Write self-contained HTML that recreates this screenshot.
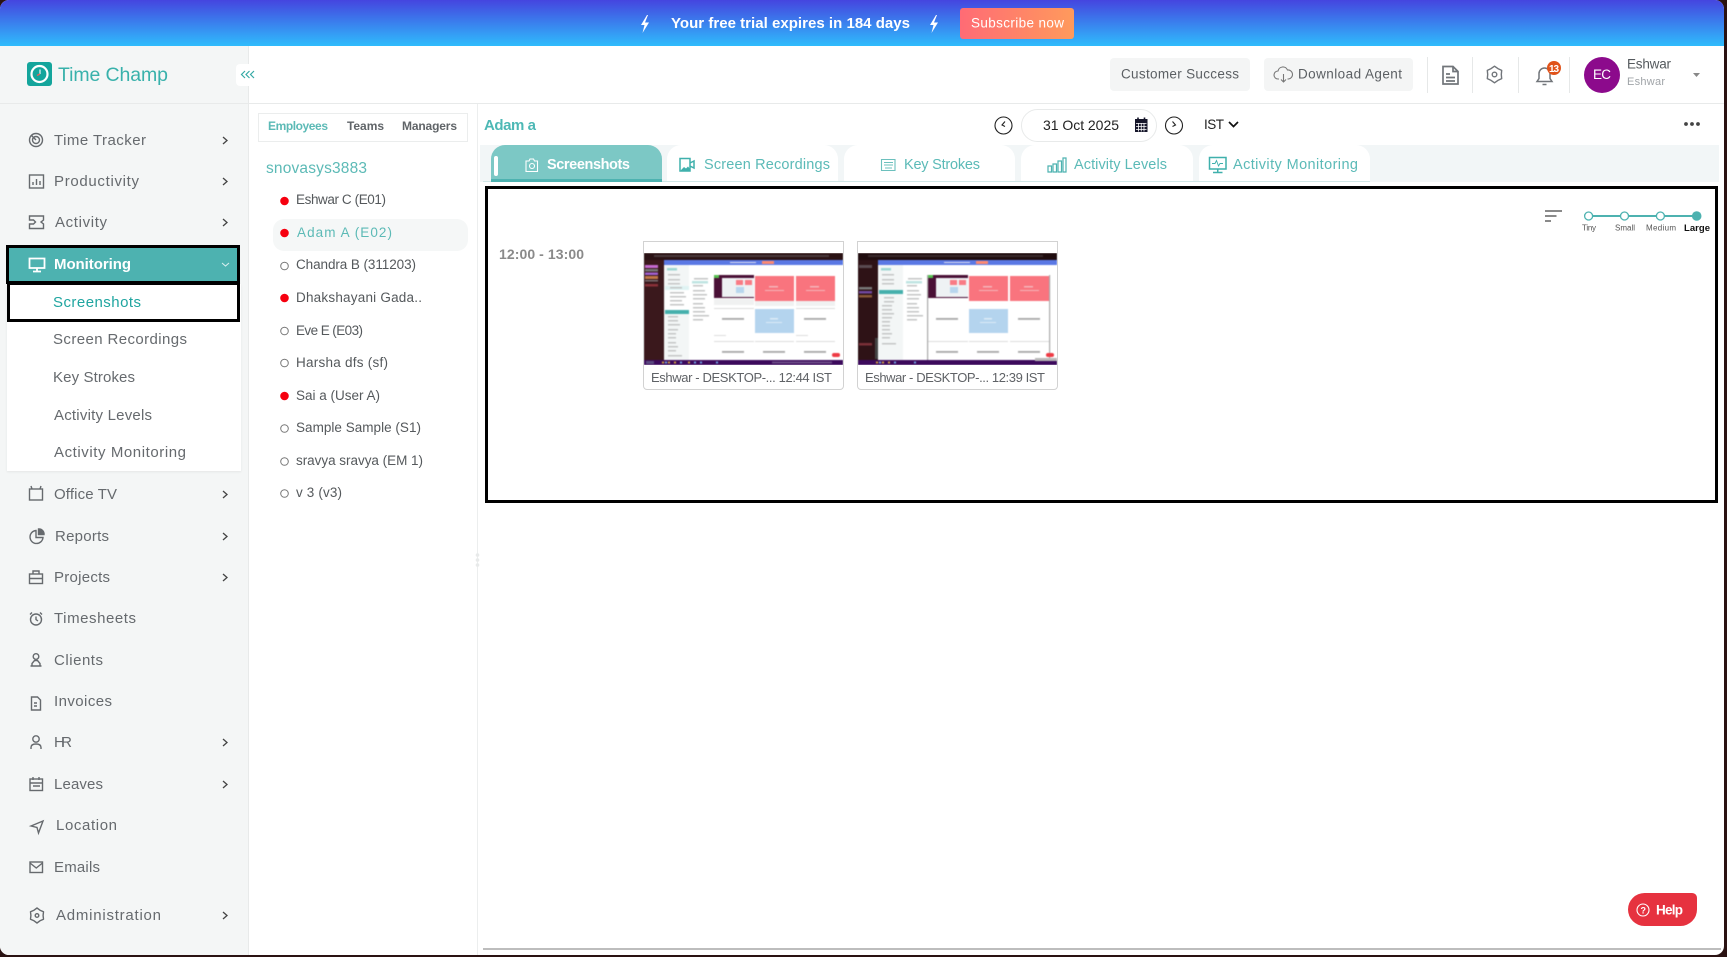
<!DOCTYPE html>
<html><head><meta charset="utf-8"><title>Time Champ</title>
<style>
html,body{margin:0;padding:0;width:1727px;height:957px;overflow:hidden;background:#2a1212}
*{box-sizing:border-box}
#app{position:absolute;left:0;top:0;width:1724px;height:955px;background:#fff;border-radius:9px;overflow:hidden}
.b{position:absolute}
svg{position:absolute;left:0;top:0}
text{font-family:"Liberation Sans",sans-serif}
.m{font-size:15px;fill:#666a6e}
.s{font-size:15px;fill:#666a6e}
.l{font-size:13.5px;fill:#55595c}
.tb{font-size:14.5px;fill:#5bbab7}
.ic{fill:none;stroke:#666a6e;stroke-width:1.4}
.ch{fill:none;stroke:#444;stroke-width:1.3}
.th{position:absolute;width:199px;height:112px;overflow:hidden}
.th svg{filter:blur(.45px)}
</style></head><body>
<div id="app">
<div class="b" style="left:0;top:0;width:100%;height:46px;background:linear-gradient(180deg,#4545df,#2fbcfc)"></div>
<div class="b" style="left:960px;top:8px;width:114px;height:31px;border-radius:3px;background:linear-gradient(90deg,#ff6b75,#ff9a5c)"></div>
<div class="b" style="left:0;top:46px;width:249px;height:909px;background:#f4f6f6;border-right:1px solid #e8eaea"></div>
<div class="b" style="left:0;top:103px;width:100%;height:1px;background:#e8eaea"></div>
<div class="b" style="left:236px;top:64px;width:23px;height:22px;background:#fff;border-radius:4px"></div>
<div class="b" style="left:27px;top:62px;width:25px;height:24px;background:#14a59c;border-radius:3px"></div>
<div class="b" style="left:7px;top:284px;width:234px;height:187px;background:#fff;box-shadow:0 1px 2px #e4e6e6"></div>
<div class="b" style="left:6px;top:245px;width:234px;height:39px;background:#4db2b0;border:3px solid #000"></div>
<div class="b" style="left:7px;top:282px;width:233px;height:40px;background:#fff;border:3px solid #000"></div>
<div class="b" style="left:477px;top:104px;width:1px;height:851px;background:#eceeee"></div>
<div class="b" style="left:258px;top:113px;width:210px;height:29px;border:1px solid #ebeded"></div>
<div class="b" style="left:273px;top:219px;width:195px;height:32px;background:#f5f7f7;border-radius:11px"></div>
<div class="b" style="left:1110px;top:58px;width:140px;height:33px;background:#f4f5f5;border-radius:4px"></div>
<div class="b" style="left:1264px;top:58px;width:149px;height:33px;background:#f4f5f5;border-radius:4px"></div>
<div class="b" style="left:1427px;top:57px;width:1px;height:36px;background:#e6e8e8"></div>
<div class="b" style="left:1472px;top:57px;width:1px;height:36px;background:#e6e8e8"></div>
<div class="b" style="left:1518px;top:57px;width:1px;height:36px;background:#e6e8e8"></div>
<div class="b" style="left:1569px;top:57px;width:1px;height:36px;background:#e6e8e8"></div>
<div class="b" style="left:1584px;top:57px;width:36px;height:36px;background:#8c0a8c;border-radius:50%"></div>
<div class="b" style="left:1021px;top:109px;width:136px;height:33px;border:1px solid #e8eaea;border-radius:17px"></div>
<div class="b" style="left:480px;top:145px;width:1239px;height:37px;background:#f2f6f7"></div>
<div class="b" style="left:483px;top:181px;width:887px;height:1px;background:#cfe6e6"></div>
<div class="b" style="left:491px;top:145px;width:171px;height:37px;background:#7cc8c5;border-radius:14px 14px 0 0;border-bottom:3px solid #4db2b0"></div>
<div class="b" style="left:494px;top:156px;width:4px;height:20px;background:#fff;border-radius:2px"></div>
<div class="b" style="left:667px;top:145px;width:171px;height:36px;background:#fff;border-radius:14px 14px 0 0"></div>
<div class="b" style="left:844px;top:145px;width:171px;height:36px;background:#fff;border-radius:14px 14px 0 0"></div>
<div class="b" style="left:1021px;top:145px;width:172px;height:36px;background:#fff;border-radius:14px 14px 0 0"></div>
<div class="b" style="left:1199px;top:145px;width:171px;height:36px;background:#fff;border-radius:14px 14px 0 0"></div>
<div class="b" style="left:485px;top:186px;width:1233px;height:317px;border:3px solid #000"></div>
<div class="b" style="left:643px;top:241px;width:201px;height:149px;border:1px solid #d2d2d2;border-radius:0 0 4px 4px;background:#fff"></div>
<div class="b" style="left:857px;top:241px;width:201px;height:149px;border:1px solid #d2d2d2;border-radius:0 0 4px 4px;background:#fff"></div>

<div class="th" style="left:644px;top:253px"><svg width="199" height="112" viewBox="0 0 199 112">
<rect width="199" height="112" fill="#3a181c"/><rect width="199" height="7" fill="#2a1214"/><rect x="10" y="2" width="175" height="2" fill="#4a3a3c"/>
<rect x="20" y="7" width="179" height="5" fill="#5a78e4"/><rect x="118" y="8" width="12" height="3" fill="#ff8a70"/><rect x="86" y="9" width="26" height="1" fill="#dde"/>
<rect x="20" y="12" width="179" height="95" fill="#fff"/>
<rect x="20" y="12" width="25" height="95" fill="#f3f6f6"/><rect x="21" y="33" width="24" height="4" fill="#dff3f3"/><rect x="21" y="37" width="24" height="20" fill="#fff"/><rect x="21" y="57" width="24" height="4" fill="#45b0ac"/>
<rect x="23" y="15" width="10" height="2.500" fill="#9fd6d3"/>
<g fill="#c4c6c6"><rect x="24" y="21" width="12" height="1.500"/><rect x="24" y="26" width="12" height="1.500"/><rect x="24" y="30" width="12" height="1.500"/><rect x="26" y="34" width="12" height="1.500"/><rect x="26" y="39" width="14" height="1.500"/><rect x="26" y="43" width="16" height="1.500"/><rect x="26" y="47" width="12" height="1.500"/><rect x="26" y="51" width="14" height="1.500"/><rect x="24" y="63" width="10" height="1.500"/><rect x="24" y="67" width="10" height="1.500"/><rect x="24" y="71" width="12" height="1.500"/><rect x="24" y="76" width="10" height="1.500"/><rect x="24" y="80" width="8" height="1.500"/><rect x="24" y="84" width="8" height="1.500"/><rect x="24" y="89" width="8" height="1.500"/><rect x="24" y="93" width="10" height="1.500"/><rect x="24" y="97" width="8" height="1.500"/><rect x="24" y="102" width="14" height="1.500"/><rect x="50" y="25" width="14" height="1.500"/><rect x="49" y="32" width="10" height="1.500"/><rect x="49" y="37" width="12" height="1.500"/><rect x="49" y="41" width="14" height="1.500"/><rect x="49" y="45" width="12" height="1.500"/><rect x="49" y="50" width="10" height="1.500"/><rect x="49" y="54" width="12" height="1.500"/><rect x="49" y="58" width="12" height="1.500"/><rect x="49" y="62" width="16" height="1.500"/><rect x="49" y="66" width="10" height="1.500"/></g>
<rect x="48" y="28" width="16" height="2.500" fill="#bfe4e2"/>
<g fill="#f0f1f1"><rect x="70" y="46" width="40" height="6"/><rect x="111" y="48" width="39" height="5"/><rect x="152" y="48" width="39" height="5"/></g>
<rect x="70" y="22" width="40" height="23" fill="#4a1036"/><rect x="78" y="25" width="32" height="19" fill="#eef2f4"/><rect x="70" y="22" width="5" height="3" fill="#56c050"/><rect x="92" y="27" width="7" height="5" fill="#f97b85"/><rect x="101" y="27" width="7" height="5" fill="#f97b85"/><rect x="92" y="34" width="8" height="6" fill="#b8d6ee"/>
<rect x="111" y="23" width="39" height="25" fill="#f9747e"/><rect x="152" y="23" width="39" height="25" fill="#f9747e"/><rect x="111" y="56" width="39" height="24" fill="#b4d4ee"/>
<g fill="#f4b5ba"><rect x="125" y="33" width="9" height="1.500"/><rect x="121" y="37" width="19" height="1"/><rect x="166" y="33" width="9" height="1.500"/><rect x="162" y="37" width="19" height="1"/></g>
<g fill="#dcebf7"><rect x="126" y="65" width="8" height="1.500"/><rect x="122" y="69" width="16" height="1"/></g>
<g fill="#a8a8a8"><rect x="78" y="65" width="22" height="1.800"/><rect x="160" y="65" width="22" height="1.800"/><rect x="78" y="98" width="22" height="1.800"/><rect x="119" y="98" width="22" height="1.800"/><rect x="160" y="98" width="22" height="1.800"/></g>
<g fill="#ddd"><rect x="70" y="55" width="40" height="1"/><rect x="152" y="55" width="39" height="1"/><rect x="70" y="88" width="40" height="1"/><rect x="111" y="88" width="39" height="1"/><rect x="152" y="88" width="39" height="1"/><rect x="70" y="82" width="12" height="1"/><rect x="152" y="82" width="12" height="1"/></g>
<rect x="188" y="100" width="8" height="4" rx="2" fill="#ee3b45"/>
<rect y="107" width="199" height="5" fill="#3c0a5c"/>
<g fill="#cfa040"><rect x="18" y="108.500" width="2" height="2"/><rect x="24" y="108.500" width="2" height="2"/><rect x="30" y="108.500" width="2" height="2"/><rect x="44" y="108.500" width="2" height="2"/></g><g fill="#6fa0e0"><rect x="21" y="108.500" width="2" height="2"/><rect x="36" y="108.500" width="2" height="2"/><rect x="50" y="108.500" width="2" height="2"/><rect x="56" y="108.500" width="2" height="2"/><rect x="72" y="108.500" width="2" height="2"/></g><rect x="2" y="108" width="8" height="3" fill="#5a4a80"/><rect x="128" y="108.500" width="60" height="2" fill="#6a4a85"/>
<rect x="1" y="12" width="13" height="3" fill="#c56ad0"/><rect x="1" y="16" width="13" height="2.500" fill="#777"/><rect x="1" y="19.500" width="13" height="2.500" fill="#a060d0"/><rect x="1" y="23" width="13" height="3" fill="#c07848"/><rect x="1" y="27" width="13" height="1.500" fill="#7a7072"/><rect x="1" y="31" width="13" height="2.500" fill="#8a3038"/>
</svg></div>
<div class="th" style="left:858px;top:253px"><svg width="199" height="112" viewBox="0 0 199 112">
<rect width="199" height="112" fill="#2e1216"/><rect width="199" height="7" fill="#1f0c0e"/><rect x="10" y="2" width="175" height="2" fill="#3a2a2c"/>
<rect x="20" y="7" width="179" height="5" fill="#5a78e4"/><rect x="118" y="8" width="12" height="3" fill="#ff8a70"/><rect x="86" y="9" width="26" height="1" fill="#dde"/>
<rect x="20" y="12" width="179" height="95" fill="#fff"/>
<rect x="20" y="12" width="25" height="95" fill="#f3f6f6"/><rect x="21" y="37" width="24" height="4" fill="#45b0ac"/>
<rect x="23" y="15" width="10" height="2.500" fill="#9fd6d3"/>
<g fill="#c4c6c6"><rect x="24" y="21" width="12" height="1.500"/><rect x="24" y="26" width="12" height="1.500"/><rect x="24" y="30" width="12" height="1.500"/><rect x="26" y="44" width="10" height="1.500"/><rect x="26" y="48" width="10" height="1.500"/><rect x="24" y="52" width="10" height="1.500"/><rect x="24" y="56" width="10" height="1.500"/><rect x="24" y="60" width="12" height="1.500"/><rect x="24" y="64" width="10" height="1.500"/><rect x="24" y="68" width="8" height="1.500"/><rect x="24" y="72" width="8" height="1.500"/><rect x="24" y="76" width="8" height="1.500"/><rect x="24" y="80" width="10" height="1.500"/><rect x="24" y="84" width="8" height="1.500"/><rect x="24" y="90" width="14" height="1.500"/><rect x="50" y="25" width="14" height="1.500"/><rect x="49" y="32" width="10" height="1.500"/><rect x="49" y="37" width="12" height="1.500"/><rect x="49" y="41" width="14" height="1.500"/><rect x="49" y="45" width="12" height="1.500"/><rect x="49" y="50" width="10" height="1.500"/><rect x="49" y="54" width="12" height="1.500"/><rect x="49" y="58" width="12" height="1.500"/><rect x="49" y="62" width="16" height="1.500"/><rect x="49" y="66" width="10" height="1.500"/></g>
<rect x="48" y="28" width="16" height="2.500" fill="#bfe4e2"/>
<rect x="70" y="22" width="40" height="23" fill="#4a1036"/><rect x="78" y="25" width="32" height="19" fill="#eef2f4"/><rect x="70" y="22" width="5" height="3" fill="#56c050"/><rect x="92" y="27" width="7" height="5" fill="#f97b85"/><rect x="101" y="27" width="7" height="5" fill="#f97b85"/><rect x="92" y="34" width="8" height="6" fill="#b8d6ee"/>
<rect x="111" y="23" width="39" height="25" fill="#f9747e"/><rect x="152" y="23" width="39" height="25" fill="#f9747e"/><rect x="111" y="56" width="39" height="24" fill="#b4d4ee"/>
<g fill="#f4b5ba"><rect x="125" y="33" width="9" height="1.500"/><rect x="121" y="37" width="19" height="1"/><rect x="166" y="33" width="9" height="1.500"/><rect x="162" y="37" width="19" height="1"/></g>
<g fill="#dcebf7"><rect x="126" y="65" width="8" height="1.500"/><rect x="122" y="69" width="16" height="1"/></g>
<g fill="#a8a8a8"><rect x="78" y="65" width="22" height="1.800"/><rect x="160" y="65" width="22" height="1.800"/><rect x="78" y="98" width="22" height="1.800"/><rect x="119" y="98" width="22" height="1.800"/><rect x="160" y="98" width="22" height="1.800"/></g>
<g fill="#ddd"><rect x="70" y="88" width="40" height="1"/><rect x="111" y="88" width="39" height="1"/><rect x="152" y="88" width="39" height="1"/></g>
<rect x="69" y="22" width="1.200" height="85" fill="#aaa"/><rect x="191" y="22" width="1.200" height="85" fill="#aaa"/>
<rect x="188" y="100" width="8" height="4" rx="2" fill="#ee3b45"/>
<rect x="17" y="85" width="3" height="21" fill="#444"/>
<rect y="107" width="199" height="5" fill="#3c0a5c"/>
<g fill="#cfa040"><rect x="18" y="108.500" width="2" height="2"/><rect x="24" y="108.500" width="2" height="2"/><rect x="30" y="108.500" width="2" height="2"/></g><g fill="#6fa0e0"><rect x="21" y="108.500" width="2" height="2"/><rect x="36" y="108.500" width="2" height="2"/><rect x="56" y="108.500" width="2" height="2"/></g><rect x="177" y="105" width="22" height="3" fill="#b8b8b8"/>
<rect x="1" y="12" width="13" height="3" fill="#5a4a50"/><rect x="1" y="34" width="13" height="2.500" fill="#777"/><rect x="1" y="38" width="13" height="2.500" fill="#7048a0"/><rect x="1" y="42" width="13" height="2.500" fill="#8a5a38"/><rect x="1" y="90" width="13" height="2.500" fill="#7a3038"/>
</svg></div>

<div class="b" style="left:1628px;top:893px;width:69px;height:33px;background:#e6323f;border-radius:17px 5px 17px 17px"></div>
<div class="b" style="left:483px;top:948px;width:1238px;height:2px;background:#bdbdbd"></div>
<svg width="1727" height="957" viewBox="0 0 1727 957">
<text x="671" y="28" font-size="15" font-weight="700" fill="#fff" textLength="239">Your free trial expires in 184 days</text>
<path d="M647 15l-6 10h3.500l-2 8 6.500-10.500h-4l3-7.500z" fill="#fff"/><path d="M936 15l-6 10h3.500l-2 8 6.500-10.500h-4l3-7.500z" fill="#fff"/>
<text x="971" y="27.500" font-size="13.500" fill="#fff" textLength="93">Subscribe now</text>
<circle cx="39.500" cy="74" r="8" fill="none" stroke="#fff" stroke-width="2.200"/><path d="M40 69.500v4.500" stroke="#fff" stroke-width="1.100"/><path d="M40 74l-3 1.500" stroke="#e8605a" stroke-width="1.300"/>
<text x="58" y="81" font-size="19.500" fill="#38b1ab" textLength="110">Time Champ</text>
<path d="M245 71l-3.500 3.500 3.500 3.500M249.500 71l-3.500 3.500 3.500 3.500M254 71l-3.500 3.500 3.500 3.500" fill="none" stroke="#35a9a5" stroke-width="1.200"/>
<text class="m" x="54" y="145" textLength="92">Time Tracker</text>
<text class="m" x="54" y="186" textLength="85">Productivity</text>
<text class="m" x="55" y="227" textLength="52">Activity</text>
<text x="54" y="269" font-size="15" fill="#fff" font-weight="700" textLength="77">Monitoring</text>
<text x="53" y="307" font-size="15" fill="#1fa5a0" textLength="88">Screenshots</text>
<text class="s" x="53" y="344" textLength="134">Screen Recordings</text>
<text class="s" x="53" y="382" textLength="82">Key Strokes</text>
<text class="s" x="54" y="420" textLength="98">Activity Levels</text>
<text class="s" x="54" y="457" textLength="132">Activity Monitoring</text>
<text class="m" x="54" y="499" textLength="63">Office TV</text>
<text class="m" x="55" y="541" textLength="54">Reports</text>
<text class="m" x="54" y="582" textLength="56">Projects</text>
<text class="m" x="54" y="623" textLength="82">Timesheets</text>
<text class="m" x="54" y="665" textLength="49">Clients</text>
<text class="m" x="54" y="706" textLength="58">Invoices</text>
<text class="m" x="54" y="747" textLength="18">HR</text>
<text class="m" x="54" y="789" textLength="49">Leaves</text>
<text class="m" x="56" y="830" textLength="61">Location</text>
<text class="m" x="54" y="872" textLength="46">Emails</text>
<text class="m" x="56" y="920" textLength="105">Administration</text>
<g class="ch">
<path d="M223 137l4 3.500-4 3.500M223 178l4 3.500-4 3.500M223 219l4 3.500-4 3.500M223 491l4 3.500-4 3.500M223 533l4 3.500-4 3.500M223 574l4 3.500-4 3.500M223 739l4 3.500-4 3.500M223 781l4 3.500-4 3.500M223 912l4 3.500-4 3.500"/></g>
<path d="M222 263l3.500 3 3.500-3" fill="none" stroke="#d5eeee" stroke-width="1.100"/>
<g class="ic">
<circle cx="36" cy="140" r="6.500"/><circle cx="36" cy="140" r="3.500"/><path d="M31 135l5 5"/>
<rect x="29.500" y="175" width="14" height="13"/><path d="M33 185v-3M36.500 185v-6M40 185v-4"/>
<path d="M29.500 216h14v4l-2.500 2 2.500 2v4.500h-14v-4.500h4l2-2-2-2h-4z"/>
<rect x="29.500" y="489" width="13" height="11"/><path d="M32 489l-1-3M40 489l1-3"/>
<path d="M36 530.500a6.500 6.500 0 1 0 7 7h-7z"/><path d="M38.500 529a5 5 0 0 1 5.500 5.500h-5.500z" fill="#666a6e"/>
<rect x="29.500" y="574" width="13" height="9.500"/><path d="M33 574v-3h6v3M29.500 578.500h13"/>
<circle cx="36" cy="619.500" r="5.500"/><path d="M36 616.500v3l2 1.500M30 614.500l2-2M42 614.500l-2-2"/>
<circle cx="36" cy="656.500" r="2.800"/><path d="M32 666v-2.500l2.500-3h3l2.500 3v2.500zM30.500 666h11"/>
<path d="M31.500 697h6l3 3v10h-9zM34 703h3M34 706h3"/>
<circle cx="36" cy="739" r="3.200"/><path d="M31 749v-1.500c0-2.500 2-3.500 5-3.500s5 1 5 3.500v1.500"/>
<rect x="30" y="779" width="12.500" height="11.500"/><path d="M33 777v3M39 777v3M30 783h12.500M33 786h7"/>
<path d="M31 826l12-5-4.500 12-1.500-5.500z"/>
<rect x="30" y="862" width="12.500" height="10.500"/><path d="M30 863l6.250 5 6.250-5"/>
<path transform="translate(37 915.500)" stroke-linejoin="round" d="M6.100 0L6.500 3.700L3 5.300L0 7.500L-3 5.300L-6.500 3.700L-6.100 0L-6.500 -3.700L-3 -5.300L0 -7.500L3 -5.300L6.500 -3.700Z"/><circle cx="37" cy="915.500" r="1.800"/>
</g>
<path d="M29.500 258.500h15v9.500h-15zM37 268v3M33 271.500h8" fill="none" stroke="#fff" stroke-width="1.800"/>
<text x="268" y="130" font-size="12" font-weight="700" fill="#5cbab6" textLength="60">Employees</text>
<text x="347" y="130" font-size="12" font-weight="700" fill="#606468" textLength="37">Teams</text>
<text x="402" y="130" font-size="12" font-weight="700" fill="#606468" textLength="55">Managers</text>
<text x="266" y="173" font-size="15.500" fill="#5cbab6" textLength="101">snovasys3883</text>
<g fill="#f6000f"><circle cx="284.500" cy="201" r="4.300"/><circle cx="284.500" cy="233" r="4.300"/><circle cx="284.500" cy="298" r="4.300"/><circle cx="284.500" cy="396" r="4.300"/></g>
<g fill="none" stroke="#777" stroke-width="1"><circle cx="284.500" cy="266" r="3.800"/><circle cx="284.500" cy="331" r="3.800"/><circle cx="284.500" cy="363" r="3.800"/><circle cx="284.500" cy="428.500" r="3.800"/><circle cx="284.500" cy="461.500" r="3.800"/><circle cx="284.500" cy="493.500" r="3.800"/></g>
<text class="l" x="296" y="204" textLength="90">Eshwar C (E01)</text>
<text class="l" x="297" y="237" style="fill:#5cbab6" textLength="95">Adam A (E02)</text>
<text class="l" x="296" y="269" textLength="120">Chandra B (311203)</text>
<text class="l" x="296" y="302" textLength="126">Dhakshayani Gada..</text>
<text class="l" x="296" y="335" textLength="67">Eve E (E03)</text>
<text class="l" x="296" y="367" textLength="92">Harsha dfs (sf)</text>
<text class="l" x="296" y="400" textLength="84">Sai a (User A)</text>
<text class="l" x="296" y="432" textLength="125">Sample Sample (S1)</text>
<text class="l" x="296" y="465" textLength="127">sravya sravya (EM 1)</text>
<text class="l" x="296" y="497" textLength="46">v 3 (v3)</text>
<text x="1121" y="78.500" font-size="13.500" fill="#5b5f63" textLength="118">Customer Success</text>
<text x="1298" y="78.500" font-size="13.500" fill="#5b5f63" textLength="104">Download Agent</text>
<path d="M1279 79h-1a4 4 0 0 1 0-8 5 5 0 0 1 9.500-1 4.500 4.500 0 0 1 1 9h-1M1283.500 74v8M1281 79.500l2.500 2.500 2.500-2.500" fill="none" stroke="#777" stroke-width="1.100"/>
<path d="M1443 66.500h10l5 5v12.500h-15zM1453 66.500v5h5M1446 74h4M1446 77.500h9M1446 81h9" fill="none" stroke="#71757a" stroke-width="1.700"/>
<path transform="translate(1494.500 74.500)" stroke-linejoin="round" d="M6.800 0L7.190 4.150L3.400 5.890L0 8.300L-3.400 5.890L-7.190 4.150L-6.800 0L-7.190 -4.150L-3.400 -5.890L0 -8.300L3.400 -5.890L7.190 -4.150Z" fill="none" stroke="#71757a" stroke-width="1.400"/><circle cx="1494.500" cy="74.500" r="2.300" fill="none" stroke="#71757a" stroke-width="1.400"/>
<path d="M1537 81.500h15l-2-3v-5a5.500 5.500 0 0 0-11 0v5zM1542.500 84.500h4" fill="none" stroke="#71757a" stroke-width="1.500"/>
<circle cx="1554" cy="68" r="7" fill="#e0531a"/><text x="1549" y="72" font-size="10" font-weight="700" fill="#fff" textLength="10">13</text>
<text x="1593" y="79" font-size="13.500" fill="#fff" textLength="18">EC</text>
<text x="1627" y="68.500" font-size="13.500" fill="#555a5e" textLength="44">Eshwar</text>
<text x="1627" y="85" font-size="11" fill="#a0a4a8" textLength="38">Eshwar</text>
<path d="M1693 73h7l-3.500 4z" fill="#888"/>
<text x="484" y="130" font-size="15" font-weight="700" fill="#4db8b5" textLength="52">Adam a</text>
<g fill="none" stroke="#222" stroke-width="1.100"><circle cx="1003.500" cy="125.500" r="8.500"/><path d="M1005 121.500l-3 3.500 3 1.500"/><circle cx="1174" cy="125.500" r="8.500"/><path d="M1172.500 121.500l3 3.500-3 1.500"/></g>
<text x="1043" y="130" font-size="14" fill="#222" textLength="76">31 Oct 2025</text>
<rect x="1135" y="119" width="12.500" height="13" fill="#16162a"/><path d="M1136 123.500h10.500M1136 126.500h10.500M1136 129.500h10.500M1138.500 123v8.500M1141.250 123v8.500M1144 123v8.500" stroke="#fff" stroke-width=".8"/><path d="M1138 117.500v3M1144.500 117.500v3" stroke="#16162a" stroke-width="1.600"/>
<text x="1204" y="129" font-size="13.500" fill="#222" textLength="20">IST</text>
<path d="M1229 122l4.500 4.500 4.500-4.500" fill="none" stroke="#111" stroke-width="1.700"/>
<g fill="#444"><circle cx="1686" cy="124" r="1.900"/><circle cx="1692" cy="124" r="1.900"/><circle cx="1698" cy="124" r="1.900"/></g>
<text x="547" y="169" font-size="14.500" font-weight="700" fill="#fff" textLength="83">Screenshots</text>
<path d="M526 161h3l1-2h3.500l1 2h3v10.500h-11.500z" fill="none" stroke="#fff" stroke-width="1.100"/><circle cx="532" cy="166" r="2.500" fill="none" stroke="#fff" stroke-width="1.100"/>
<text class="tb" x="704" y="169" textLength="126">Screen Recordings</text>
<path d="M680 158.500h10v12.500h-10zM690 163l4-2v7l-4-2z" fill="none" stroke="#3fb0ac" stroke-width="1.500"/><path d="M681 170l3-3 2 1.500 2-2 2 2.500v1.500h-9z" fill="#3fb0ac"/>
<text class="tb" x="904" y="169" textLength="76">Key Strokes</text>
<path d="M881.500 159.500h13.500v11h-13.500zM884 162.500h9M884 165h9M885 168h7" fill="none" stroke="#6cc0bd" stroke-width="1.100"/>
<text class="tb" x="1074" y="169" textLength="93">Activity Levels</text>
<path d="M1048 166h3.500v6h-3.500zM1053 164h3.500v8h-3.500zM1058 161h3.500v11h-3.500zM1063 158h3v14h-3z" fill="none" stroke="#4db2b0" stroke-width="1.200"/>
<text class="tb" x="1233" y="169" textLength="125">Activity Monitoring</text>
<path d="M1209.500 157.500h16.500v11.500h-16.500zM1213 172.500h9.500M1217.750 169v3.500" fill="none" stroke="#3fb0ac" stroke-width="1.500"/><path d="M1212 163.500h3l1.500-3 2 5.500 1.500-2.500h3" fill="none" stroke="#3fb0ac" stroke-width=".9"/>
<text x="499" y="259" font-size="14" font-weight="700" fill="#8a8a8a" textLength="85">12:00 - 13:00</text>
<text x="651" y="382" font-size="13" fill="#5f6266" textLength="181">Eshwar - DESKTOP-... 12:44 IST</text>
<text x="865" y="382" font-size="13" fill="#5f6266" textLength="180">Eshwar - DESKTOP-... 12:39 IST</text>
<path d="M1545 211h17M1545 216h11.500M1545 221h6" stroke="#8a8a8a" stroke-width="2" fill="none"/>
<path d="M1589 216h108" stroke="#4db2b0" stroke-width="2"/>
<g fill="#fff" stroke="#4db2b0" stroke-width="1.300"><circle cx="1588.600" cy="216" r="4"/><circle cx="1624.500" cy="216" r="4"/><circle cx="1660.400" cy="216" r="4"/></g><circle cx="1696.700" cy="216" r="4.800" fill="#4db2b0"/>
<text x="1582" y="230.500" font-size="8" fill="#555" textLength="14">Tiny</text>
<text x="1615" y="230.500" font-size="8" fill="#555" textLength="20">Small</text>
<text x="1646" y="230.500" font-size="8" fill="#555" textLength="30">Medium</text>
<text x="1684" y="231" font-size="9.500" font-weight="700" fill="#111" textLength="26">Large</text>
<circle cx="1643" cy="910" r="6" fill="none" stroke="#fff" stroke-width="1.100"/><text x="1640.500" y="913.500" font-size="9" fill="#fff" font-weight="700">?</text>
<text x="1656" y="914.500" font-size="13.500" font-weight="700" fill="#fff" textLength="27">Help</text>
<g fill="#e8eaea"><circle cx="477.500" cy="555" r="1.800"/><circle cx="477.500" cy="560" r="1.800"/><circle cx="477.500" cy="565" r="1.800"/></g>
</svg>
</div>
</body></html>
